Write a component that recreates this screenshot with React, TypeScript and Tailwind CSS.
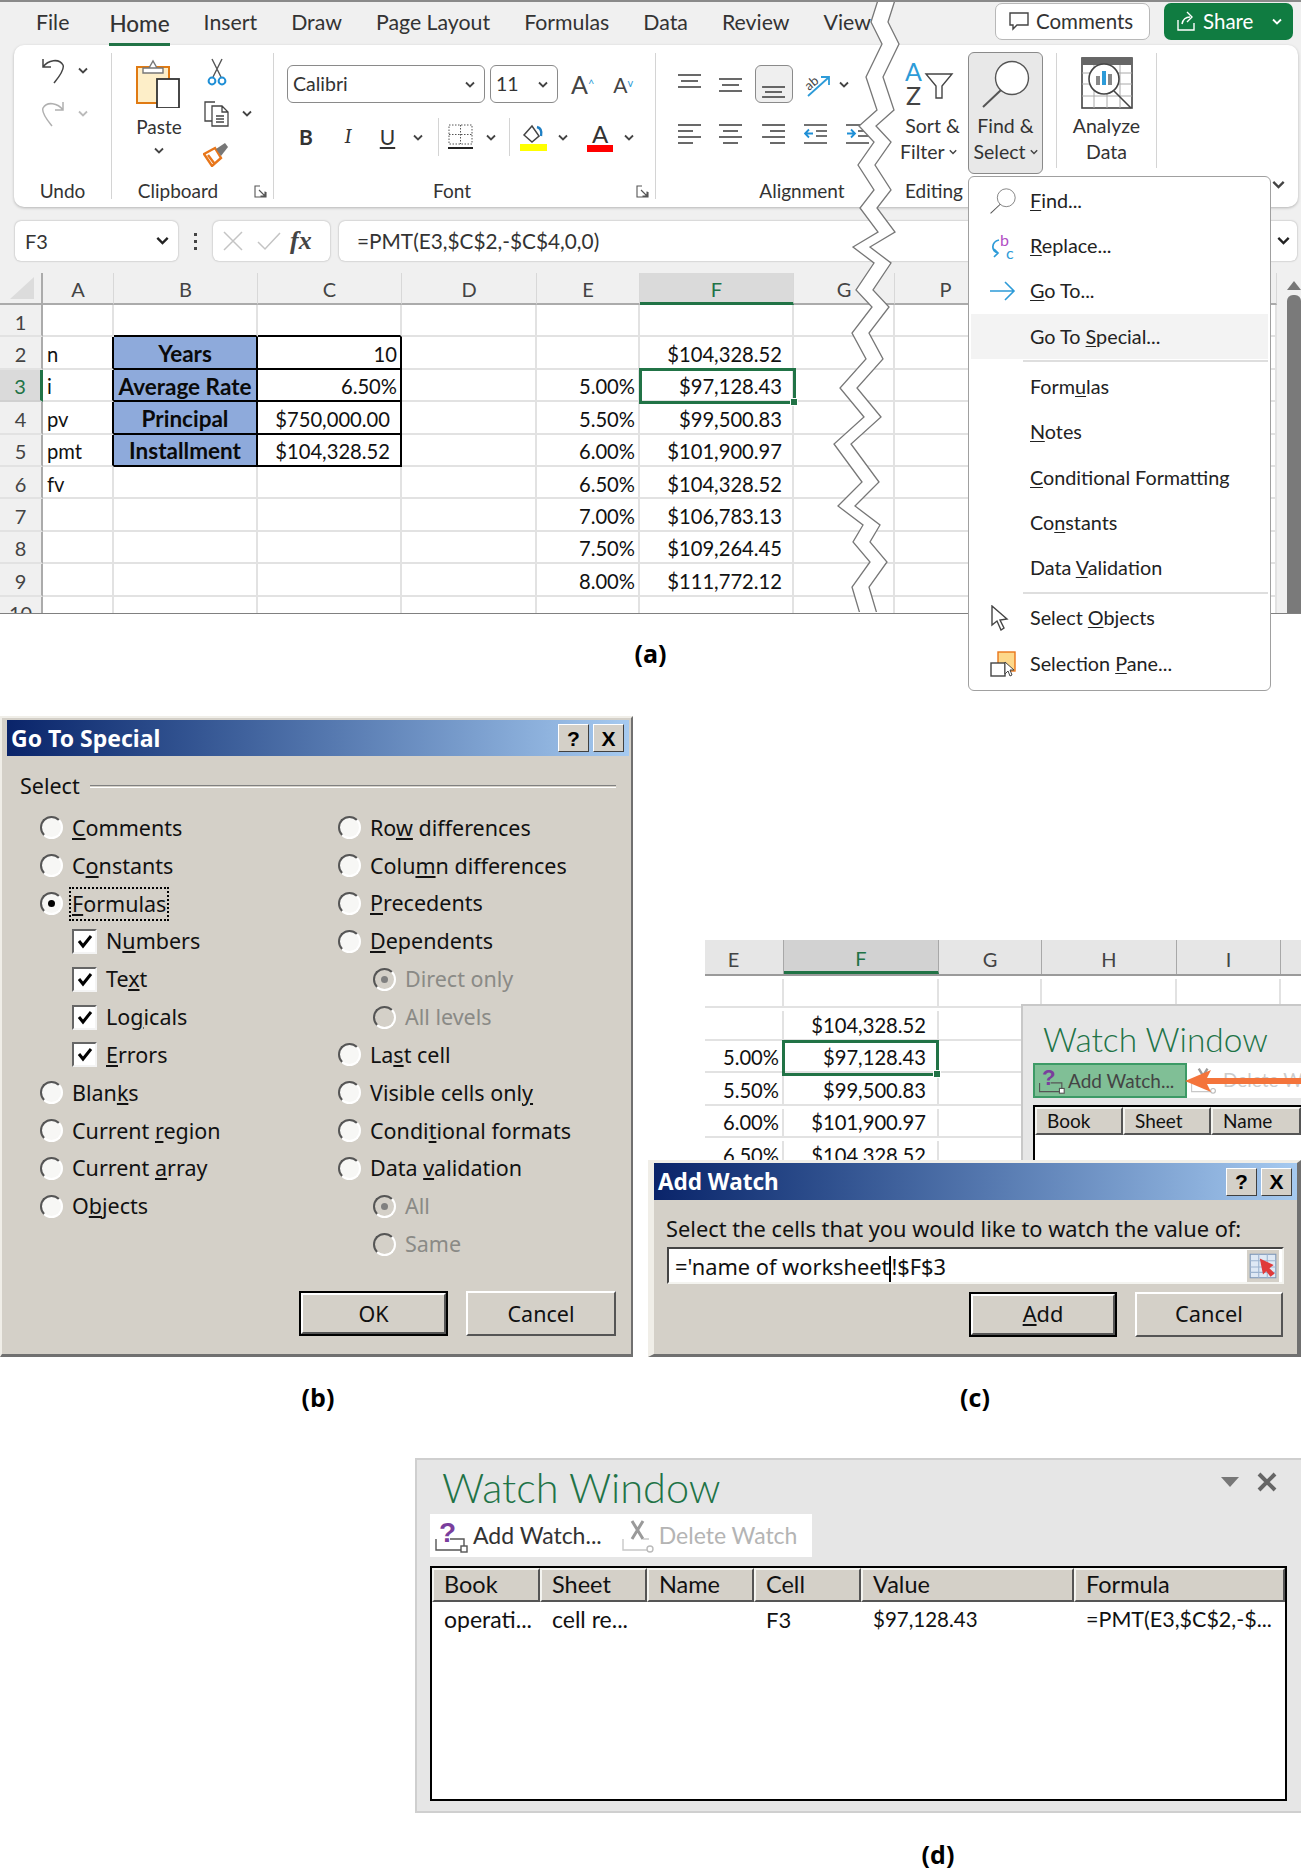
import { ReactNode } from 'react';

const sheetRows: Record<string, Record<number, string>> = {
  A: { 2: 'n', 3: 'i', 4: 'pv', 5: 'pmt', 6: 'fv' },
  B: { 2: 'Years', 3: 'Average Rate', 4: 'Principal', 5: 'Installment' },
  C: { 2: '10', 3: '6.50%', 4: '$750,000.00', 5: '$104,328.52' },
  E: { 3: '5.00%', 4: '5.50%', 5: '6.00%', 6: '6.50%', 7: '7.00%', 8: '7.50%', 9: '8.00%' },
  F: { 2: '$104,328.52', 3: '$97,128.43', 4: '$99,500.83', 5: '$101,900.97', 6: '$104,328.52', 7: '$106,783.13', 8: '$109,264.45', 9: '$111,772.12' },
};

const breakLine = [
  [878, 0], [871, 22], [882, 44], [866, 77], [877, 110], [859, 126], [874, 142], [858, 165], [874, 190], [860, 208],
  [878, 232], [853, 247], [874, 263], [856, 290], [872, 307], [852, 333], [866, 359], [840, 388], [864, 417], [834, 444],
  [862, 482], [838, 506], [863, 525], [853, 542], [870, 562], [852, 587], [860, 614],
];

// "&" marks the access key, same as in a Windows label
const Label = ({ text }: { text: string }) => {
  const i = text.indexOf('&');
  if (i < 0) return <>{text}</>;
  return (
    <>
      {text.slice(0, i)}
      <span className="underline underline-offset-2">{text[i + 1]}</span>
      {text.slice(i + 2)}
    </>
  );
};

const Chevron = ({ color = '#444', size = 10 }: { color?: string; size?: number }) => (
  <svg width={size} height={size * 0.7} viewBox="0 0 10 7" className="shrink-0">
    <path d="M1 1.5 L5 5.5 L9 1.5" fill="none" stroke={color} strokeWidth="1.8" />
  </svg>
);

const Lines = ({ rows }: { rows: number[][] }) => (
  <svg width="24" height="22" viewBox="0 0 24 22">
    {rows.map((r, i) => (
      <line key={i} x1={r[0]} x2={r[1]} y1={r[2]} y2={r[2]} stroke="#444" strokeWidth="1.6" />
    ))}
  </svg>
);

const UndoIcon = ({ color, flip }: { color: string; flip?: boolean }) => (
  <svg width="24" height="27" viewBox="0 0 24 27" className={flip ? '-scale-x-100' : ''}>
    <path d="M2 2 V10 H10 M2 10 C7 3 18 1 22 8 C24 13 17 21 13 26" fill="none" stroke={color} strokeWidth="1.5" />
  </svg>
);

const PasteIcon = () => (
  <svg width="46" height="50" viewBox="0 0 46 50">
    <rect x="1" y="9" width="32" height="36" fill="#fdeec8" stroke="#e07a12" strokeWidth="2" />
    <path d="M7 10 H27 V15 H7 Z M13 10 L17 3 L21 10" fill="#fff" stroke="#777" strokeWidth="1.4" />
    <rect x="21" y="21" width="22" height="29" fill="#fff" stroke="#333" strokeWidth="1.8" />
  </svg>
);

const CutIcon = () => (
  <svg width="20" height="28" viewBox="0 0 20 28">
    <path d="M5 1 L14 19 M15 1 L6 19" stroke="#555" strokeWidth="1.4" fill="none" />
    <circle cx="5" cy="23" r="3.4" fill="none" stroke="#1f8fd6" strokeWidth="2" />
    <circle cx="15" cy="23" r="3.4" fill="none" stroke="#1f8fd6" strokeWidth="2" />
  </svg>
);

const CopyIcon = () => (
  <svg width="27" height="27" viewBox="0 0 27 27">
    <path d="M12 2 H2 V21 H9" fill="none" stroke="#444" strokeWidth="1.3" />
    <path d="M9 6 H19 L25 12 V26 H9 Z M19 6 V12 H25 M13 16 H21 M13 19 H21 M13 22 H21" fill="#fff" stroke="#444" strokeWidth="1.3" />
  </svg>
);

const PainterIcon = () => (
  <svg width="27" height="26" viewBox="0 0 27 26">
    <path d="M1 13 L12 7 L18 17 L9 25 Z M5 14 L11 22" fill="#fff" stroke="#e8761a" strokeWidth="2.4" />
    <path d="M13 8 L22 2 L25 6 L18 15 Z" fill="#777" />
  </svg>
);

const FillIcon = () => (
  <svg width="27" height="28" viewBox="0 0 27 28">
    <path d="M4 12 L12 3 L19 13 L12 19 Z" fill="none" stroke="#444" strokeWidth="1.5" />
    <path d="M17 4 C21 5 22 8 21 13" fill="none" stroke="#1f7fc4" strokeWidth="2.4" />
    <rect x="0" y="21" width="27" height="7" fill="#ffff00" />
  </svg>
);

const BorderIcon = () => (
  <svg width="25" height="26" viewBox="0 0 25 26">
    <rect x="1" y="1" width="23" height="19" fill="none" stroke="#555" strokeDasharray="1.5 1.5" />
    <path d="M12.5 1 V20 M1 10.5 H24" stroke="#555" strokeDasharray="1.5 1.5" />
    <path d="M0 24 H25" stroke="#222" strokeWidth="2" />
  </svg>
);

const OrientIcon = () => (
  <svg width="27" height="25" viewBox="0 0 27 25">
    <path d="M4 24 L24 6 M17 5 H25 V13" fill="none" stroke="#2d9bd8" strokeWidth="1.8" />
    <text x="0" y="15" fontSize="13" fill="#444" transform="rotate(-40 8 10)" fontFamily="Lato">ab</text>
  </svg>
);

const IndentIcon = ({ flip }: { flip?: boolean }) => (
  <svg width="24" height="22" viewBox="0 0 24 22">
    <path d="M0 2 H23 M12 8 H23 M12 13 H23 M0 20 H23" stroke="#444" strokeWidth="1.6" />
    {flip ? (
      <path d="M9 10.5 H1 M5 6.5 L1 10.5 L5 14.5" fill="none" stroke="#1f8fd6" strokeWidth="1.8" />
    ) : (
      <path d="M1 10.5 H9 M5 6.5 L9 10.5 L5 14.5" fill="none" stroke="#1f8fd6" strokeWidth="1.8" />
    )}
  </svg>
);

const SortIcon = () => (
  <svg width="50" height="44" viewBox="0 0 50 44">
    <text x="0" y="19" fontSize="25" fill="#2d9bd8" fontFamily="Lato">A</text>
    <text x="1" y="43" fontSize="25" fill="#444" fontFamily="Lato">Z</text>
    <path d="M21 12 H47 L37 24 V36 H31 V24 Z" fill="#fff" stroke="#444" strokeWidth="1.4" />
  </svg>
);

const MagnifierIcon = ({ size = 48, stroke = 1.4 }: { size?: number; stroke?: number }) => (
  <svg width={size} height={size} viewBox="0 0 48 48">
    <circle cx="30" cy="18" r="16.5" fill="#fff" stroke="#555" strokeWidth={stroke} />
    <path d="M19 30 L1 47" stroke="#555" strokeWidth={stroke + 0.6} />
  </svg>
);

const AnalyzeIcon = () => (
  <svg width="52" height="52" viewBox="0 0 52 52">
    <rect x="1" y="1" width="50" height="50" fill="#fff" stroke="#444" strokeWidth="1.6" />
    <rect x="1" y="1" width="50" height="7" fill="#666" />
    <path d="M1 16 H51 M1 27 H51 M1 39 H51 M13 8 V51 M26 8 V51 M39 8 V51" stroke="#aaa" />
    <circle cx="23" cy="22" r="15" fill="#fff" stroke="#444" strokeWidth="1.6" />
    <rect x="15" y="19" width="4" height="9" fill="#888" />
    <rect x="21" y="14" width="4" height="14" fill="#2d9bd8" />
    <rect x="27" y="17" width="4" height="11" fill="#888" />
    <path d="M33 34 L50 51" stroke="#444" strokeWidth="1.6" />
  </svg>
);

const ReplaceIcon = () => (
  <svg width="26" height="28" viewBox="0 0 26 28">
    <text x="10" y="14" fontSize="16" fill="#b14fc5" fontFamily="Lato">b</text>
    <text x="16" y="27" fontSize="16" fill="#2d9bd8" fontFamily="Lato">c</text>
    <path d="M9 8 C1 10 1 19 8 21 M4 17 L8 21 L4 25" fill="none" stroke="#2d9bd8" strokeWidth="1.7" />
  </svg>
);

const CursorIcon = () => (
  <svg width="20" height="26" viewBox="0 0 20 26">
    <path d="M2 1 V20 L7 16 L11 25 L14 23 L10 15 L17 14 Z" fill="#fff" stroke="#444" strokeWidth="1.4" />
  </svg>
);

const PaneIcon = () => (
  <svg width="26" height="26" viewBox="0 0 26 26">
    <rect x="8" y="1" width="17" height="19" fill="#fdd88a" stroke="#e8761a" strokeWidth="1.4" />
    <rect x="1" y="12" width="14" height="13" fill="#fff" stroke="#444" strokeWidth="1.4" />
    <path d="M15 11 V23 L18 20 L20 25 L22 24 L20 19 L24 19 Z" fill="#fff" stroke="#444" />
  </svg>
);

const AddWatchIcon = ({ w = 34 }: { w?: number }) => (
  <svg width={w} height={w} viewBox="0 0 34 34">
    <text x="5" y="23" fontSize="28" fontWeight="700" fill="#7a3e9d" fontFamily="Liberation Sans">?</text>
    <path d="M2 20 V31 H28 M16 20 H30 V27" fill="none" stroke="#555" strokeWidth="1.4" />
    <rect x="27" y="27" width="6" height="6" fill="#fff" stroke="#555" strokeWidth="1.4" />
  </svg>
);

const DeleteWatchIcon = ({ w = 34 }: { w?: number }) => (
  <svg width={w} height={w} viewBox="0 0 34 34">
    <path d="M11 2 L22 20 M22 2 L11 20" stroke="#9a9a9a" strokeWidth="3" />
    <path d="M2 20 V31 H26 M22 20 H28" fill="none" stroke="#c8c8c8" strokeWidth="1.4" />
    <circle cx="29" cy="30" r="3" fill="#fff" stroke="#bbb" strokeWidth="1.4" />
  </svg>
);

const PickerIcon = () => (
  <svg width="32" height="32" viewBox="0 0 30 30" className="shrink-0">
    <rect x="0" y="0" width="30" height="30" fill="#d4d0c8" />
    <rect x="3" y="4" width="24" height="22" fill="#dfe9f5" stroke="#7d97b8" />
    <path d="M3 10 H27 M3 16 H27 M3 21 H27 M11 4 V26 M19 4 V26" stroke="#9db4d0" />
    <path d="M12 8 L25 14 L21 17 L26 22 L22 25 L18 20 L15 23 Z" fill="#e03a3a" />
  </svg>
);

const Launcher = () => (
  <svg width="13" height="13" viewBox="0 0 13 13">
    <path d="M6 1 H1 V12 H12 V7 M5 5 L11 11 M11 6.5 V11 H6.5" fill="none" stroke="#555" strokeWidth="1.1" />
  </svg>
);

const GroupLabel = ({ children }: { children: ReactNode }) => (
  <div className="h-[22px] flex items-center justify-center text-[19px] text-[#333] whitespace-nowrap">{children}</div>
);

const Sep = () => <div className="w-[1px] bg-[#d4d4d4] my-[8px]" />;

const Ribbon = () => (
  <div className="ml-[14px] mr-[3px] h-[162px] rounded-[10px] bg-white shadow-[0_1px_3px_rgba(0,0,0,0.25)] flex text-[#333]">
    {/* undo */}
    <div className="w-[97px] flex flex-col pt-[12px] pb-[5px]">
      <div className="pl-[27px] flex items-center gap-[13px]">
        <UndoIcon color="#444" />
        <Chevron />
      </div>
      <div className="pl-[27px] mt-[16px] flex items-center gap-[13px]">
        <UndoIcon color="#b0b0b0" flip />
        <Chevron color="#bbb" />
      </div>
      <div className="flex-1" />
      <GroupLabel>Undo</GroupLabel>
    </div>
    <Sep />
    {/* clipboard */}
    <div className="w-[161px] flex flex-col pt-[13px] pb-[5px]">
      <div className="flex flex-1">
        <div className="w-[91px] flex flex-col items-center pl-[3px]">
          <PasteIcon />
          <div className="text-[19px] leading-[24px] mt-[7px]">Paste</div>
          <div className="mt-[8px]"><Chevron /></div>
        </div>
        <div className="flex flex-col gap-[14px]">
          <div className="pl-[4px]"><CutIcon /></div>
          <div className="flex items-center gap-[12px]"><CopyIcon /><Chevron /></div>
          <PainterIcon />
        </div>
      </div>
      <div className="flex items-center">
        <div className="w-[132px]"><GroupLabel>Clipboard</GroupLabel></div>
        <div className="ml-[10px]"><Launcher /></div>
      </div>
    </div>
    <Sep />
    {/* font */}
    <div className="w-[381px] flex flex-col pt-[20px] pb-[5px] pl-[13px]">
      <div className="flex items-center gap-[5px]">
        <div className="w-[198px] h-[38px] border border-[#8a8a8a] rounded-[6px] flex items-center justify-between pl-[5px] pr-[9px] text-[19.5px]">
          Calibri <Chevron />
        </div>
        <div className="w-[68px] h-[38px] border border-[#8a8a8a] rounded-[6px] flex items-center justify-between pl-[5px] pr-[9px] text-[19.5px]">
          11 <Chevron />
        </div>
        <div className="ml-[8px] text-[25px] leading-none text-[#444]">A<sup className="text-[11px] text-[#2d9bd8]">^</sup></div>
        <div className="ml-[14px] text-[21px] leading-none text-[#444]">A<sup className="text-[11px] text-[#2d9bd8]">v</sup></div>
      </div>
      <div className="flex items-center mt-[14px] h-[40px]">
        <div className="w-[38px] text-center text-[21px] font-bold">B</div>
        <div className="w-[46px] text-center text-[21px] italic font-serif">I</div>
        <div className="w-[33px] text-center text-[21px] underline">U</div>
        <div className="ml-[9px] mr-[15px]"><Chevron /></div>
        <div className="w-[1px] h-[38px] bg-[#d4d4d4] mr-[9px]" />
        <BorderIcon />
        <div className="ml-[13px] mr-[13px]"><Chevron /></div>
        <div className="w-[1px] h-[38px] bg-[#d4d4d4] mr-[10px]" />
        <FillIcon />
        <div className="ml-[11px] mr-[19px]"><Chevron /></div>
        <div className="flex flex-col items-center w-[26px]">
          <span className="text-[24px] leading-[22px]">A</span>
          <span className="w-[26px] h-[7px] bg-[#ff0000]" />
        </div>
        <div className="ml-[11px]"><Chevron /></div>
      </div>
      <div className="flex-1" />
      <div className="flex items-center">
        <div className="w-[330px]"><GroupLabel>Font</GroupLabel></div>
        <div className="ml-[19px]"><Launcher /></div>
      </div>
    </div>
    <Sep />
    {/* alignment, runs under the break line */}
    <div className="w-[249px] shrink-0 flex flex-col pt-[20px] pb-[5px] pl-[22px]">
      <div className="flex items-center">
        <div className="w-[41px] -mt-[8px]"><Lines rows={[[0, 23, 6], [3, 20, 12], [0, 23, 18]]} /></div>
        <div className="w-[36px] mt-[2px]"><Lines rows={[[0, 23, 5], [3, 20, 11], [0, 23, 17]]} /></div>
        <div className="w-[38px] h-[38px] border border-[#8a8a8a] rounded-[6px] bg-[#efefef] flex items-end justify-center pb-[3px]">
          <Lines rows={[[0, 23, 10], [3, 20, 15], [0, 23, 20]]} />
        </div>
        <div className="ml-[11px]"><OrientIcon /></div>
        <div className="ml-[8px]"><Chevron /></div>
      </div>
      <div className="flex items-center mt-[20px]">
        <div className="w-[41px]"><Lines rows={[[0, 23, 2], [0, 15, 8], [0, 23, 14], [0, 15, 20]]} /></div>
        <div className="w-[43px]"><Lines rows={[[0, 23, 2], [4, 19, 8], [0, 23, 14], [4, 19, 20]]} /></div>
        <div className="w-[42px]"><Lines rows={[[0, 23, 2], [8, 23, 8], [0, 23, 14], [8, 23, 20]]} /></div>
        <div className="w-[42px]"><IndentIcon flip /></div>
        <IndentIcon />
      </div>
      <div className="flex-1" />
      <div className="pl-[48px] w-[200px]"><GroupLabel>Alignment</GroupLabel></div>
    </div>
    {/* editing */}
    <div className="w-[66px] flex flex-col pt-[17px] pb-[5px] shrink-0">
      <SortIcon />
      <div className="text-[19.5px] leading-[26px] mt-[7px] w-[55px] text-center whitespace-nowrap">Sort &amp;</div>
      <div className="text-[19.5px] leading-[26px] -ml-[5px] w-[60px] flex items-center gap-[4px] whitespace-nowrap">Filter <Chevron size={8} /></div>
      <div className="flex-1" />
      <div className="w-[58px]"><GroupLabel>Editing</GroupLabel></div>
    </div>
    <div className="w-[75px] h-[122px] mt-[7px] ml-[-3px] border border-[#8a8a8a] rounded-[6px] bg-[#e8e8e8] flex flex-col items-center pt-[7px] shrink-0">
      <MagnifierIcon />
      <div className="text-[19.5px] leading-[26px] mt-[5px]">Find &amp;</div>
      <div className="text-[19.5px] leading-[26px] flex items-center gap-[4px] whitespace-nowrap">Select <Chevron size={8} /></div>
    </div>
    <div className="w-[13px] shrink-0" />
    <div className="w-[1px] h-[115px] mt-[8px] bg-[#d4d4d4] shrink-0" />
    <div className="w-[99px] flex flex-col items-center pt-[12px] shrink-0">
      <AnalyzeIcon />
      <div className="text-[19.5px] leading-[26px] mt-[4px]">Analyze</div>
      <div className="text-[19.5px] leading-[26px]">Data</div>
    </div>
    <div className="w-[1px] h-[115px] mt-[8px] bg-[#d4d4d4] shrink-0" />
    <div className="flex-1 flex justify-end items-end pb-[18px] pr-[13px]"><Chevron size={13} /></div>
  </div>
);

const FormulaBar = () => (
  <div className="mt-[14px] h-[40px] flex pl-[15px] pr-[4px] text-[#333]">
    <div className="w-[163px] bg-white rounded-[6px] shadow-[0_0_2px_rgba(0,0,0,0.35)] flex items-center justify-between pl-[10px] pr-[9px] text-[20px]">
      F3 <Chevron size={13} color="#222" />
    </div>
    <div className="w-[35px] flex flex-col items-center justify-center gap-[4px]">
      <span className="w-[3px] h-[3px] bg-[#444]" />
      <span className="w-[3px] h-[3px] bg-[#444]" />
      <span className="w-[3px] h-[3px] bg-[#444]" />
    </div>
    <div className="w-[117px] bg-white rounded-[6px] shadow-[0_0_2px_rgba(0,0,0,0.35)] flex items-center gap-[13px] pl-[9px]">
      <svg width="22" height="22" viewBox="0 0 22 22"><path d="M2 2 L20 20 M20 2 L2 20" stroke="#c4c4c4" strokeWidth="1.5" /></svg>
      <svg width="24" height="20" viewBox="0 0 24 20"><path d="M1 11 L8 18 L23 2" fill="none" stroke="#c4c4c4" strokeWidth="1.5" /></svg>
      <span className="font-['Liberation_Serif',serif] italic font-bold text-[26px] leading-none -ml-[4px] text-[#444]">fx</span>
    </div>
    <div className="w-[9px]" />
    <div className="flex-1 bg-white rounded-[6px] shadow-[0_0_2px_rgba(0,0,0,0.35)] flex items-center justify-between pl-[18px] pr-[7px] text-[20.8px]">
      =PMT(E3,$C$2,-$C$4,0,0)
      <Chevron size={13} color="#222" />
    </div>
  </div>
);

const letterCols = ['A', 'B', 'C', 'D', 'E', 'F', 'G', 'P', 'Q'];

const Sheet = () => (
  <div className="mt-[12px] h-[340px] flex overflow-hidden relative">
    <div className="w-[1277px] bg-white grid grid-cols-[43px_71px_144px_144px_135px_103px_154px_101px_102px_280px] grid-rows-[32px_repeat(10,32.4px)] text-[20.2px] text-[#111]">
      <div className="bg-[#f0f0f0] border-b-2 border-r-2 border-[#ababab] flex items-end justify-end pr-[7px] pb-[4px]">
        <div className="w-0 h-0 border-l-[24px] border-l-transparent border-b-[22px] border-b-[#dcdcdc]" />
      </div>
      {letterCols.map(c => (
        <div
          key={c}
          className={`flex items-center justify-center pt-[2px] text-[20px] border-r border-[#d8d8d8] ${c === 'F' ? 'bg-[#dadada] text-[#217346] border-b-[3px] border-b-[#217346]' : 'bg-[#f0f0f0] text-[#444] border-b-2 border-b-[#ababab]'}`}
        >
          {c === 'Q' ? '' : c}
        </div>
      ))}
      {Array.from({ length: 10 }, (_, i) => i + 1).map(r => (
        <RowCells key={r} r={r} />
      ))}
    </div>
    {/* scrollbar */}
    <div className="w-[24px] bg-[#f0f0f0] flex flex-col items-center pt-[8px] pl-[10px]">
      <div className="w-0 h-0 border-l-[7px] border-r-[7px] border-b-[9px] border-l-transparent border-r-transparent border-b-[#777]" />
      <div className="w-[14px] flex-1 bg-[#7a7a7a] rounded-t-[6px] mt-[5px]" />
    </div>
    {/* F3 selection */}
    <div className="absolute left-[639px] top-[95px] w-[157px] h-[36px] border-[3px] border-[#217346]">
      <div className="absolute -right-[5px] -bottom-[5px] w-[8px] h-[8px] bg-[#217346] border border-white" />
    </div>
  </div>
);

const RowCells = ({ r }: { r: number }) => {
  const boxed = r >= 2 && r <= 5;
  return (
    <>
      <div className={`relative flex items-center justify-center pt-[3px] text-[20px] border-r-2 border-b-2 ${r === 3 ? 'bg-[#dadada] text-[#217346] border-r-[3px] border-r-[#217346] border-b-[#d0d0d0]' : 'bg-[#f0f0f0] text-[#444] border-r-[#ababab] border-b-[#e2e2e2]'}`}>
        {r}
      </div>
      {letterCols.map(c => {
        const text = sheetRows[c]?.[r] ?? '';
        const blackR = boxed && (c === 'A' || c === 'B' || c === 'C');
        const blackB = (boxed || r === 1) && (c === 'B' || c === 'C');
        const fill = boxed && c === 'B' ? 'bg-[#8eaadb] font-bold justify-center text-[#0a0a0a] text-[22.5px]' : '';
        const align = c === 'C' || c === 'E' || c === 'F' ? 'justify-end' : '';
        // currency cells in C keep the accounting gap on the right
        const pad = c === 'F' ? 'pr-[10px]' : c === 'A' ? 'pl-[4px]' : c === 'C' && r > 3 ? 'pr-[10px]' : c === 'B' ? '' : 'pr-[3px]';
        return (
          <div
            key={c}
            className={`flex items-center pt-[3px] whitespace-nowrap border-r-2 border-b-2 ${blackR ? 'border-r-black' : 'border-r-[#e2e2e2]'} ${blackB ? 'border-b-black' : 'border-b-[#e2e2e2]'} ${fill} ${align} ${pad}`}
          >
            {text}
          </div>
        );
      })}
    </>
  );
};

const menuItems = [
  { label: '&Find...', icon: <MagnifierIcon size={26} stroke={1.3} /> },
  { label: '&Replace...', icon: <ReplaceIcon /> },
  {
    label: '&Go To...',
    icon: (
      <svg width="26" height="20" viewBox="0 0 26 20">
        <path d="M0 10 H24 M15 1 L24 10 L15 19" fill="none" stroke="#2d9bd8" strokeWidth="1.6" />
      </svg>
    ),
  },
  { label: 'Go To &Special...', hot: true, sep: true },
  { label: 'Form&ulas' },
  { label: '&Notes' },
  { label: '&Conditional Formatting' },
  { label: 'Co&nstants' },
  { label: 'Data &Validation', sep: true },
  { label: 'Select &Objects', icon: <CursorIcon /> },
  { label: 'Selection &Pane...', icon: <PaneIcon /> },
];

const FindMenu = () => (
  <div className="absolute z-20 left-[968px] top-[174px] w-[303px] h-[515px] bg-white border border-[#a0a0a0] rounded-[6px] pt-[1px] px-[2px] text-[#222] text-[19.8px]">
    {menuItems.map(item => (
      <div key={item.label}>
        <div className={`h-[45.3px] flex items-center ${item.hot ? 'bg-[#f3f3f3]' : ''}`}>
          <div className="w-[59px] pl-[19px] flex items-center justify-start">{item.icon}</div>
          <span><Label text={item.label} /></span>
        </div>
        {item.sep && <div className="ml-[52px] h-[2px] bg-[#dedede] mt-[1px] mb-[2px]" />}
      </div>
    ))}
  </div>
);

const ExcelPanel = () => (
  <section className="relative h-[614px] bg-[#f0f0f0] border-t-2 border-b-2 border-t-[#8a8a8a] border-b-[#808080] font-['Lato',sans-serif]">
    <div className="h-[43px] flex items-center pl-[36px] text-[21.3px] text-[#333]">
      <div className="flex gap-[34px]">
        {['File', 'Home', 'Insert', 'Draw', 'Page Layout', 'Formulas', 'Data', 'Review', 'View'].map(t =>
          t === 'Home' ? (
            <div key={t} className="relative font-medium ml-[6px] text-[22.5px]">
              {t}
              <div className="absolute left-0 right-0 -bottom-[6px] h-[3px] bg-[#217346]" />
            </div>
          ) : (
            <div key={t}>{t}</div>
          )
        )}
      </div>
      <div className="ml-auto flex gap-[14px] pr-[8px] -mt-[5px] text-[20.5px]">
        <div className="w-[155px] h-[37px] bg-white border border-[#b8b8b8] rounded-[7px] flex items-center pl-[13px] gap-[7px]">
          <svg width="20" height="20" viewBox="0 0 20 20"><path d="M1 2 H19 V14 H8 L4 18 V14 H1 Z" fill="none" stroke="#444" strokeWidth="1.4" /></svg>
          Comments
        </div>
        <div className="w-[129px] h-[37px] bg-[#107c41] rounded-[7px] flex items-center pl-[12px] gap-[7px] text-white">
          <svg width="20" height="22" viewBox="0 0 20 22"><path d="M2 10 V20 H18 V13 M6 14 C7 9 10 7 14 7 M11 2 L16 7 L11 12" fill="none" stroke="#fff" strokeWidth="1.4" /></svg>
          Share
          <div className="ml-[12px]"><Chevron color="#fff" /></div>
        </div>
      </div>
    </div>
    <Ribbon />
    <FormulaBar />
    <Sheet />
    {/* axis break across the sheet */}
    <svg width="1301" height="610" viewBox="0 2 1301 610" className="absolute left-0 top-0 z-10 pointer-events-none">
      <polygon
        points={[...breakLine.map(p => `${p[0]},${p[1]}`), ...breakLine.slice().reverse().map(p => `${p[0] + 17},${p[1]}`)].join(' ')}
        fill="#fff"
      />
      <polyline points={breakLine.map(p => `${p[0]},${p[1]}`).join(' ')} fill="none" stroke="#777" strokeWidth="1.3" />
      <polyline points={breakLine.map(p => `${p[0] + 17},${p[1]}`).join(' ')} fill="none" stroke="#777" strokeWidth="1.3" />
    </svg>
    <FindMenu />
  </section>
);

const Caption = ({ children, className = '' }: { children: ReactNode; className?: string }) => (
  <div className={`font-['Open_Sans',sans-serif] font-bold text-[25px] text-black text-center ${className}`}>{children}</div>
);

const Radio = ({ checked, disabled }: { checked?: boolean; disabled?: boolean }) => (
  <span className={`w-[23px] h-[23px] rounded-full border-2 border-t-[#555] border-l-[#555] border-b-white border-r-white flex items-center justify-center shrink-0 ${disabled ? 'bg-[#d4d0c8]' : 'bg-[#f7f7f5]'}`}>
    {checked && <span className={`w-[7px] h-[7px] rounded-full ${disabled ? 'bg-[#808080]' : 'bg-black'}`} />}
  </span>
);

const Check = () => (
  <span className="w-[25px] h-[25px] bg-white border-2 border-t-[#666] border-l-[#666] border-b-[#f4f4f4] border-r-[#f4f4f4] flex items-center justify-center shrink-0">
    <svg width="16" height="15" viewBox="0 0 16 15"><path d="M2 7 L6 12 L14 2" fill="none" stroke="#000" strokeWidth="3" /></svg>
  </span>
);

type Opt = { text: string; type?: 'check' | 'sub'; checked?: boolean; disabled?: boolean; focus?: boolean };

const leftOpts: Opt[] = [
  { text: '&Comments' },
  { text: 'C&onstants' },
  { text: '&Formulas', checked: true, focus: true },
  { text: 'N&umbers', type: 'check' },
  { text: 'Te&xt', type: 'check' },
  { text: 'Lo&gicals', type: 'check' },
  { text: '&Errors', type: 'check' },
  { text: 'Blan&ks' },
  { text: 'Current &region' },
  { text: 'Current &array' },
  { text: 'O&bjects' },
];

const rightOpts: Opt[] = [
  { text: 'Ro&w differences' },
  { text: 'Colu&mn differences' },
  { text: '&Precedents' },
  { text: '&Dependents' },
  { text: 'Direct only', type: 'sub', disabled: true, checked: true },
  { text: 'All levels', type: 'sub', disabled: true },
  { text: 'La&st cell' },
  { text: 'Visible cells onl&y' },
  { text: 'Condi&tional formats' },
  { text: 'Data &validation' },
  { text: 'All', type: 'sub', disabled: true, checked: true },
  { text: 'Same', type: 'sub', disabled: true },
];

const OptRow = ({ opt }: { opt: Opt }) => (
  <div className={`h-[37.85px] flex items-center ${opt.type === 'check' ? 'pl-[32px] gap-[9px]' : opt.type === 'sub' ? 'pl-[35px] gap-[9px]' : 'gap-[9px]'}`}>
    {opt.type === 'check' ? <Check /> : <Radio checked={opt.checked} disabled={opt.disabled} />}
    <span className={`whitespace-nowrap ${opt.disabled ? 'text-[#8a8a86]' : ''} ${opt.focus ? 'outline-2 outline-dotted outline-black px-[1px] -ml-[1px] leading-[30px]' : ''}`}>
      <Label text={opt.text} />
    </span>
  </div>
);

const ClassicBtn = ({ children, isDefault, width }: { children: ReactNode; isDefault?: boolean; width: string }) => (
  <div className={`${width} h-[45px] ${isDefault ? 'border-[2px] border-black' : ''}`}>
    <div className="w-full h-full border-2 border-t-white border-l-white border-b-[#555] border-r-[#555] flex items-center justify-center">
      {children}
    </div>
  </div>
);

const TitleBar = ({ title, btnClass }: { title: string; btnClass: string }) => (
  <div className={`bg-linear-to-r from-[#0a246a] to-[#a6caf0] flex items-center justify-between ${btnClass}`}>
    <span className="text-white font-bold whitespace-nowrap">{title}</span>
    <div className="flex gap-[4px]">
      {['?', 'X'].map(s => (
        <span key={s} className="w-[31px] h-[28px] bg-[#d4d0c8] border border-t-white border-l-white border-b-[#404040] border-r-[#404040] flex items-center justify-center text-black font-bold text-[21px] leading-none font-['Liberation_Sans',sans-serif]">{s}</span>
      ))}
    </div>
  </div>
);

const GoToSpecial = () => (
  <div className="w-[633px] h-[641px] bg-[#d4d0c8] border-t-2 border-l-2 border-r-2 border-b-[3px] border-t-[#f0eee8] border-l-[#f0eee8] border-r-[#707070] border-b-[#707070] pt-[2px] pl-[5px] pr-[2px] flex flex-col text-[21.5px] text-[#111] font-['Noto_Sans',sans-serif]">
    <TitleBar title="Go To Special" btnClass="h-[36px] pl-[4px] pr-[5px] text-[23px]" />
    <div className="h-[36px] mt-[12px] flex items-center pl-[13px] gap-[10px] pr-[13px]">
      Select
      <div className="flex-1 h-[3px] border-t border-b border-t-[#808080] border-b-white" />
    </div>
    <div className="flex mt-[5px] pl-[33px]">
      <div className="w-[298px]">{leftOpts.map(o => <OptRow key={o.text} opt={o} />)}</div>
      <div>{rightOpts.map(o => <OptRow key={o.text} opt={o} />)}</div>
    </div>
    <div className="flex justify-end gap-[18px] pr-[13px] mt-[28px]">
      <ClassicBtn isDefault width="w-[149px]">OK</ClassicBtn>
      <ClassicBtn width="w-[150px]">Cancel</ClassicBtn>
    </div>
  </div>
);

const WatchHeadCell = ({ children, width }: { children: ReactNode; width: string }) => (
  <div className={`${width} h-full shrink-0 bg-[#d4d0c8] border-2 border-t-[#f4f4f0] border-l-[#f4f4f0] border-r-[#555] border-b-[#555] flex items-center pl-[10px]`}>
    {children}
  </div>
);

const SheetFragment = () => (
  <div className="relative ml-[57px] h-[220px] overflow-hidden font-['Lato',sans-serif] text-[20.2px] text-[#111]">
    <div className="h-[36px] flex text-[20px] text-[#444] border-b-2 border-[#9a9a9a] bg-[#e6e6e6]">
      {[['E', 'w-[79px] pr-[21px]'], ['F', 'w-[155px]'], ['G', 'w-[103px]'], ['H', 'w-[135px]'], ['I', 'w-[104px]']].map(([c, w]) => (
        <div key={c} className={`${w} pt-[4px] border-r border-[#a8a8a8] flex items-center justify-center ${c === 'F' ? 'bg-[#d2d2d2] text-[#217346] border-b-[3px] border-b-[#217346]' : ''}`}>{c}</div>
      ))}
    </div>
    {[
      ['', ''],
      ['', '$104,328.52'],
      ['5.00%', '$97,128.43'],
      ['5.50%', '$99,500.83'],
      ['6.00%', '$101,900.97'],
      ['6.50%', '$104,328.52'],
    ].map((row, i) => (
      <div key={i} className="h-[32.4px] flex border-b-2 border-[#e2e2e2] pt-[3px]">
        <div className="w-[79px] border-r-2 border-[#e2e2e2] flex items-center justify-end pr-[3px]">{row[0]}</div>
        <div className="w-[155px] border-r-2 border-[#e2e2e2] flex items-center justify-end pr-[11px]">{row[1]}</div>
        <div className="w-[103px] border-r-2 border-[#e2e2e2]" />
        <div className="w-[135px] border-r-2 border-[#e2e2e2]" />
        <div className="w-[104px] border-r-2 border-[#e2e2e2]" />
      </div>
    ))}
    <div className="absolute left-[77px] top-[100px] w-[157px] h-[36px] border-[3px] border-[#217346]">
      <div className="absolute -right-[5px] -bottom-[5px] w-[8px] h-[8px] bg-[#217346] border border-white" />
    </div>
    {/* watch window opened over the sheet */}
    <div className="absolute left-[316px] top-[64px] w-[300px] h-[170px] bg-[#e6e6e6] border-l-2 border-t-2 border-[#c8c8c8]">
      <div className="pl-[20px] h-[57px] pt-[10px] flex items-center text-[33.5px] font-light text-[#217346] whitespace-nowrap">Watch Window</div>
      <div className="ml-[10px] h-[35px] bg-white flex items-center text-[19px] relative">
        <div className="w-[154px] h-full bg-[#80bf96] border-2 border-[#3d9a66] flex items-center pl-[3px] gap-[3px] text-[#444] whitespace-nowrap">
          <AddWatchIcon w={27} /> <span className="pt-[2px]">Add Watch...</span>
        </div>
        <div className="flex items-center pl-[3px] gap-[6px] text-[#ccc] whitespace-nowrap"><DeleteWatchIcon w={27} /> Delete W</div>
        <svg width="120" height="24" viewBox="0 0 120 24" className="absolute left-[152px] top-[6px]">
          <path d="M0 12 L26 1 L22 9 H120 V15 H22 L26 23 Z" fill="#f4743b" />
        </svg>
      </div>
      <div className="ml-[10px] mt-[7px] h-[70px] border-l-2 border-t-2 border-black bg-white text-[19px]">
        <div className="h-[28px] flex">
          <WatchHeadCell width="w-[88px]">Book</WatchHeadCell>
          <WatchHeadCell width="w-[88px]">Sheet</WatchHeadCell>
          <WatchHeadCell width="w-[90px]">Name</WatchHeadCell>
        </div>
      </div>
    </div>
  </div>
);

const AddWatchDialog = () => (
  <div className="relative z-10 h-[197px] bg-[#d4d0c8] border-t-[3px] border-l-[6px] border-r-[4px] border-b-[3px] border-t-[#f0eee8] border-l-[#f0eee8] border-r-[#707070] border-b-[#707070] text-[21.8px] text-[#111] font-['Noto_Sans',sans-serif]">
    <TitleBar title="Add Watch" btnClass="h-[37px] pl-[4px] pr-[5px] text-[22.5px]" />
    <div className="pl-[12px] mt-[15px] leading-[28px] whitespace-nowrap">Select the cells that you would like to watch the value of:</div>
    <div className="ml-[13px] mr-[13px] mt-[4px] h-[37px] bg-white border-2 border-t-[#444] border-l-[#444] border-b-[#f4f4f0] border-r-[#f4f4f0] flex items-center pl-[6px] pr-[3px] justify-between">
      <span className="whitespace-nowrap pt-[3px]">
        ='name of worksheet
        <span className="inline-block w-[2px] h-[26px] bg-black align-middle" />
        !$F$3
      </span>
      <PickerIcon />
    </div>
    <div className="flex justify-end gap-[18px] pr-[14px] mt-[8px]">
      <ClassicBtn isDefault width="w-[148px]"><Label text="&Add" /></ClassicBtn>
      <ClassicBtn width="w-[148px]">Cancel</ClassicBtn>
    </div>
  </div>
);

const watchCols = [
  { head: 'Book', width: 'w-[108px]', value: 'operati...', size: 'text-[23px]' },
  { head: 'Sheet', width: 'w-[107px]', value: 'cell re...', size: 'text-[23px]' },
  { head: 'Name', width: 'w-[107px]', value: '', size: '' },
  { head: 'Cell', width: 'w-[107px]', value: 'F3', size: 'text-[22px]' },
  { head: 'Value', width: 'w-[213px]', value: '$97,128.43', size: 'text-[20.5px]' },
  { head: 'Formula', width: 'flex-1', value: '=PMT(E3,$C$2,-$...', size: 'text-[21.5px]' },
];

const WatchWindow = () => (
  <div className="ml-[415px] h-[355px] bg-[#e6e6e6] border-2 border-[#cfcfcf] border-r-0 relative font-['Lato',sans-serif] text-[23.5px] text-[#111]">
    <div className="pl-[25px] h-[54px] flex items-center text-[41.5px] font-light text-[#217346] whitespace-nowrap">Watch Window</div>
    <div className="absolute right-[24px] top-[12px] flex items-center gap-[18px]">
      <div className="w-0 h-0 border-l-[9px] border-r-[9px] border-t-[10px] border-l-transparent border-r-transparent border-t-[#777]" />
      <svg width="20" height="20" viewBox="0 0 20 20"><path d="M2 2 L18 18 M18 2 L2 18" stroke="#666" strokeWidth="4" /></svg>
    </div>
    <div className="ml-[13px] h-[43px] w-[382px] bg-white flex items-center pl-[4px] text-[#333] text-[23px] whitespace-nowrap">
      <AddWatchIcon />
      <span className="ml-[5px]">Add Watch...</span>
      <span className="ml-[19px]"><DeleteWatchIcon /></span>
      <span className="ml-[4px] text-[#b4b4b4]">Delete Watch</span>
    </div>
    <div className="ml-[13px] mr-[14px] mt-[9px] h-[235px] border-[2.5px] border-black bg-white">
      <div className="h-[34px] flex">
        {watchCols.map(c => <WatchHeadCell key={c.head} width={c.width}>{c.head}</WatchHeadCell>)}
      </div>
      <div className="h-[34px] flex items-center">
        {watchCols.map(c => (
          <div key={c.head} className={`${c.width} ${c.size} pl-[12px] whitespace-nowrap`}>{c.value}</div>
        ))}
      </div>
    </div>
  </div>
);

export default function App() {
  return (
    <div className="w-[1301px] h-[1874px] bg-white overflow-hidden">
      <ExcelPanel />
      <Caption className="h-[102px] pt-[24px] leading-[30px]">(a)</Caption>
      <div className="flex justify-between items-end h-[641px]">
        <GoToSpecial />
        <div className="w-[653px] flex flex-col">
          <SheetFragment />
          <AddWatchDialog />
        </div>
      </div>
      <div className="h-[101px] flex pt-[25px] leading-[30px]">
        <Caption className="w-[636px]">(b)</Caption>
        <Caption className="w-[665px] pl-[13px]">(c)</Caption>
      </div>
      <WatchWindow />
      <Caption className="ml-[415px] w-[1046px] pt-[26px] leading-[30px]">(d)</Caption>
    </div>
  );
}
